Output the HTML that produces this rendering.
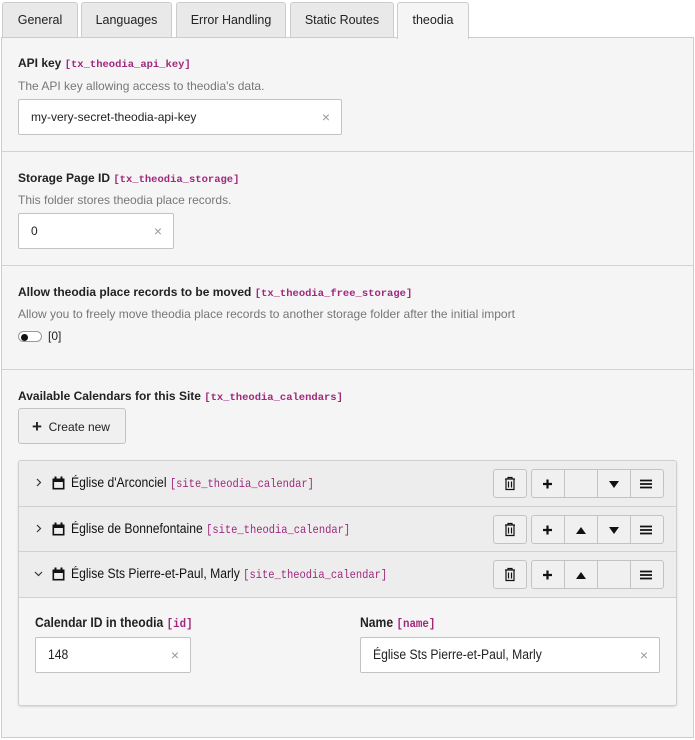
<!DOCTYPE html>
<html><head><meta charset="utf-8"><style>
*{box-sizing:border-box;margin:0;padding:0}
body{width:695px;height:740px;background:#fff;font-family:"Liberation Sans",sans-serif;font-size:12px;color:#333;position:relative;overflow:hidden}
.a{position:absolute}
.tab{position:absolute;top:2px;height:36px;border:1px solid #ccc;border-bottom:none;border-radius:3px 3px 0 0;background:#e9e9e9;font-size:12.5px;color:#222;text-align:center;line-height:34px}
.tab.on{background:#f5f5f5;height:37px;z-index:2}
.panel{position:absolute;left:1px;top:37px;width:693px;height:701px;background:#f5f5f5;border:1px solid #ccc}
.sep{position:absolute;left:1px;width:693px;height:1px;background:#d2d2d2}
.lbl{position:absolute;font-weight:bold;font-size:12px;color:#222}
.code{font-family:"Liberation Mono",monospace;font-size:10.5px;color:#a0287d;font-weight:bold}
.desc{position:absolute;font-size:12px;color:#777}
.inp{position:absolute;height:36px;background:#fff;border:1px solid #c3c3c3;border-radius:2px;line-height:34px;padding-left:12px;font-size:12px;color:#222}
.inp .x{position:absolute;right:11px;top:0;color:#999;font-size:14px}
.cond{display:inline-block;transform:scaleX(.9);transform-origin:left center;white-space:nowrap}
.btn{position:absolute;border:1px solid #c3c3c3;border-radius:3px;background:#f0f0f0}
.row{position:absolute;left:19px;width:657px;background:#ededed;border-bottom:1px solid #d0d0d0}
.t13{font-size:13.5px}
</style></head><body>
<div class="tab" style="left:2px;width:76px">General</div>
<div class="tab" style="left:81px;width:91px">Languages</div>
<div class="tab" style="left:176px;width:110px">Error Handling</div>
<div class="tab" style="left:290px;width:104px">Static Routes</div>
<div class="tab on" style="left:397px;width:72px">theodia</div>
<div class="panel"></div>

<div class="lbl" style="left:18px;top:56px">API key <span class="code">[tx_theodia_api_key]</span></div>
<div class="desc" style="left:18px;top:79px">The API key allowing access to theodia's data.</div>
<div class="inp" style="left:18px;top:99px;width:324px">my-very-secret-theodia-api-key<span class="x">×</span></div>
<div class="sep" style="top:151px"></div>

<div class="lbl" style="left:18px;top:171px">Storage Page ID <span class="code">[tx_theodia_storage]</span></div>
<div class="desc" style="left:18px;top:193px">This folder stores theodia place records.</div>
<div class="inp" style="left:18px;top:213px;width:156px">0<span class="x">×</span></div>
<div class="sep" style="top:265px"></div>

<div class="lbl" style="left:18px;top:285px">Allow theodia place records to be moved <span class="code">[tx_theodia_free_storage]</span></div>
<div class="desc" style="left:18px;top:307px">Allow you to freely move theodia place records to another storage folder after the initial import</div>
<div class="a" style="left:18px;top:331px;width:24px;height:11px;border:1px solid #999;border-radius:6px;background:#fff"><div class="a" style="left:2px;top:1.5px;width:7px;height:7px;border-radius:50%;background:#111"></div></div>
<div class="a" style="left:48px;top:329px;font-size:12px;color:#222">[0]</div>
<div class="sep" style="top:369px"></div>

<div class="lbl" style="left:18px;top:389px">Available Calendars for this Site <span class="code">[tx_theodia_calendars]</span></div>
<div class="btn" style="left:18px;top:408px;width:108px;height:36px;line-height:34px;font-size:12px;color:#222;padding-left:13px"><b style="font-size:17px;position:relative;top:1px">+</b>&nbsp; Create new</div>

<div class="a" style="left:18px;top:460px;width:659px;height:246px;border:1px solid #cfcfcf;border-radius:3px;background:#f5f5f5;box-shadow:0 1px 2px rgba(0,0,0,.12)"></div>

<div class="row" style="top:461px;height:46px;border-radius:3px 3px 0 0"></div>
<div class="row" style="top:507px;height:45px"></div>
<div class="row" style="top:552px;height:46px"></div>

<div class="a t13" style="left:71px;top:475px;color:#111"><span class="cond">Église d'Arconciel <span class="code" style="font-weight:normal;font-size:11.6px">[site_theodia_calendar]</span></span></div>
<div class="a t13" style="left:71px;top:521px;color:#111"><span class="cond">Église de Bonnefontaine <span class="code" style="font-weight:normal;font-size:11.6px">[site_theodia_calendar]</span></span></div>
<div class="a t13" style="left:71px;top:566px;color:#111"><span class="cond">Église Sts Pierre-et-Paul, Marly <span class="code" style="font-weight:normal;font-size:11.6px">[site_theodia_calendar]</span></span></div>

<div class="btn" style="left:493px;top:469px;width:34px;height:29px"></div>
<div class="btn" style="left:531px;top:469px;width:133px;height:29px"></div>
<div class="btn" style="left:493px;top:515px;width:34px;height:29px"></div>
<div class="btn" style="left:531px;top:515px;width:133px;height:29px"></div>
<div class="btn" style="left:493px;top:560px;width:34px;height:29px"></div>
<div class="btn" style="left:531px;top:560px;width:133px;height:29px"></div>
<svg class="a" style="left:0;top:0" width="695" height="740">
<g fill="none" stroke="#333" stroke-width="1.2">
<path d="M37 479l3.5 3.5L37 486"/><path d="M37 525l3.5 3.5L37 532"/><path d="M35 572l3.5 3.5L42 572"/>
</g>
<g fill="none" stroke="#111" stroke-width="1.6">
<rect x="53.3" y="479.3" width="10.4" height="9.4"/><rect x="53.3" y="525.3" width="10.4" height="9.4"/><rect x="53.3" y="570.3" width="10.4" height="9.4"/>
</g>
<g fill="#111">
<rect x="53" y="479" width="11" height="3"/><rect x="54.5" y="476.5" width="2" height="3"/><rect x="60.5" y="476.5" width="2" height="3"/>
<rect x="53" y="525" width="11" height="3"/><rect x="54.5" y="522.5" width="2" height="3"/><rect x="60.5" y="522.5" width="2" height="3"/>
<rect x="53" y="570" width="11" height="3"/><rect x="54.5" y="567.5" width="2" height="3"/><rect x="60.5" y="567.5" width="2" height="3"/>
</g>
<g stroke="#c3c3c3">
<line x1="564.5" y1="470" x2="564.5" y2="497"/><line x1="597.5" y1="470" x2="597.5" y2="497"/><line x1="630.5" y1="470" x2="630.5" y2="497"/>
<line x1="564.5" y1="516" x2="564.5" y2="543"/><line x1="597.5" y1="516" x2="597.5" y2="543"/><line x1="630.5" y1="516" x2="630.5" y2="543"/>
<line x1="564.5" y1="561" x2="564.5" y2="588"/><line x1="597.5" y1="561" x2="597.5" y2="588"/><line x1="630.5" y1="561" x2="630.5" y2="588"/>
</g>
<g fill="none" stroke="#111" stroke-width="1.2">
<path d="M505 479h10M508 479v-1.5h4v1.5M506 479.5v10h8v-10M508.5 481.5v6M511.5 481.5v6"/>
<path d="M505 525h10M508 525v-1.5h4v1.5M506 525.5v10h8v-10M508.5 527.5v6M511.5 527.5v6"/>
<path d="M505 570h10M508 570v-1.5h4v1.5M506 570.5v10h8v-10M508.5 572.5v6M511.5 572.5v6"/>
</g>
<g stroke="#111" stroke-width="2.2">
<path d="M543 484h9M547.5 479.5v9M543 530h9M547.5 525.5v9M543 575h9M547.5 570.5v9"/>
<path d="M640 480.5h12M640 484h12M640 487.5h12" stroke-width="1.8"/>
<path d="M640 526.5h12M640 530h12M640 533.5h12" stroke-width="1.8"/>
<path d="M640 571.5h12M640 575h12M640 578.5h12" stroke-width="1.8"/>
</g>
<g fill="#111">
<path d="M609 481h10l-5 7z"/><path d="M609 527h10l-5 7z"/>
<path d="M576 534h10l-5-7z"/><path d="M576 579h10l-5-7z"/>
</g>
</svg>

<div class="lbl t13" style="left:35px;top:615px"><span class="cond">Calendar ID in theodia <span class="code" style="font-size:12px">[id]</span></span></div>
<div class="inp t13" style="left:35px;top:637px;width:156px"><span class="cond">148</span><span class="x">×</span></div>
<div class="lbl t13" style="left:360px;top:615px"><span class="cond">Name <span class="code" style="font-size:12px">[name]</span></span></div>
<div class="inp t13" style="left:360px;top:637px;width:300px"><span class="cond">Église Sts Pierre-et-Paul, Marly</span><span class="x">×</span></div>
</body></html>
